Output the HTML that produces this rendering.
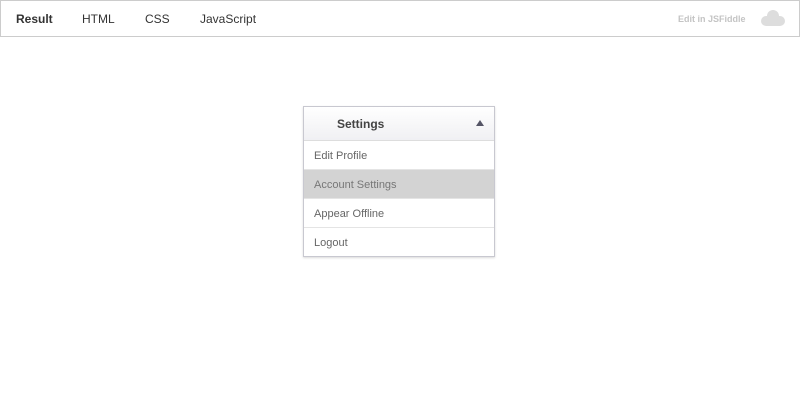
<!DOCTYPE html>
<html><head><style>
body{margin:0;width:800px;height:400px;background:#fff;font-family:"Liberation Sans",Arial,sans-serif;position:relative;overflow:hidden}
.bar{position:absolute;left:0;top:0;width:798px;height:35px;border:1px solid #ccc;}
.bar span{position:absolute;top:11px;font-size:12px;color:#333}
.dd{position:absolute;left:303px;top:106px;width:190px;border:1px solid #c8c8d0;box-shadow:0 1px 2px rgba(0,0,0,.15);background:#fff}
.hd{height:33px;border-bottom:1px solid #ddd;background:linear-gradient(#fff,#f0f0f3);position:relative}
.hd b{position:absolute;left:33px;top:10px;font-size:12px;color:#444}
.hd i{position:absolute;right:10px;top:13px;width:0;height:0;border-left:4px solid transparent;border-right:4px solid transparent;border-bottom:6px solid #556}
.it{height:28px;line-height:30px;padding-left:10px;font-size:11px;color:#666;border-bottom:1px solid #e4e4e4}
.it:last-child{border-bottom:none}
.on{background:#d3d3d3;color:#777}
</style></head><body>
<div class="bar">
<span style="left:15px;font-weight:bold">Result</span>
<span style="left:81px">HTML</span>
<span style="left:144px">CSS</span>
<span style="left:199px">JavaScript</span>
<span style="left:677px;top:13px;font-size:9px;color:#c4c4c4;font-weight:bold">Edit in JSFiddle</span>
<div style="position:absolute;left:760px;top:15px;width:24px;height:10px;background:#ddd;border-radius:5px"></div>
<div style="position:absolute;left:766px;top:9px;width:12px;height:12px;background:#ddd;border-radius:50%"></div>
</div>
<div class="dd">
<div class="hd"><b>Settings</b><i></i></div>
<div class="it">Edit Profile</div>
<div class="it on">Account Settings</div>
<div class="it">Appear Offline</div>
<div class="it">Logout</div>
</div>
</body></html>
